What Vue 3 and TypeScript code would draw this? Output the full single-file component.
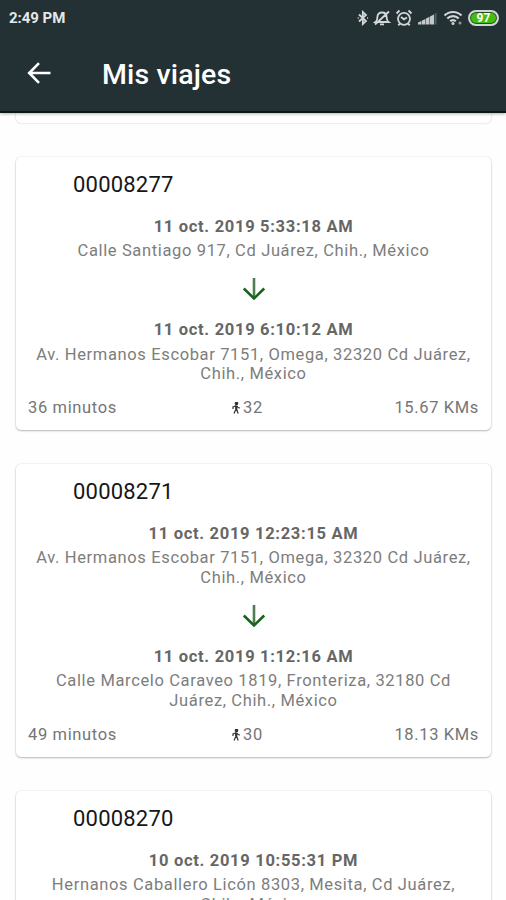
<script setup lang="ts">
interface Stop {
  date: string
  address: string[]
}
interface Trip {
  id: string
  start: Stop
  end: Stop
  duration: string
  passengers: number
  distance: string
}

const trips: Trip[] = [
  {
    id: '00008277',
    start: { date: '11 oct. 2019 5:33:18 AM', address: ['Calle Santiago 917, Cd Juárez, Chih., México'] },
    end: { date: '11 oct. 2019 6:10:12 AM', address: ['Av. Hermanos Escobar 7151, Omega, 32320 Cd Juárez,', 'Chih., México'] },
    duration: '36 minutos',
    passengers: 32,
    distance: '15.67 KMs',
  },
  {
    id: '00008271',
    start: { date: '11 oct. 2019 12:23:15 AM', address: ['Av. Hermanos Escobar 7151, Omega, 32320 Cd Juárez,', 'Chih., México'] },
    end: { date: '11 oct. 2019 1:12:16 AM', address: ['Calle Marcelo Caraveo 1819, Fronteriza, 32180 Cd', 'Juárez, Chih., México'] },
    duration: '49 minutos',
    passengers: 30,
    distance: '18.13 KMs',
  },
  {
    id: '00008270',
    start: { date: '10 oct. 2019 10:55:31 PM', address: ['Hernanos Caballero Licón 8303, Mesita, Cd Juárez,', 'Chih., México'] },
    end: { date: '', address: [] },
    duration: '',
    passengers: 0,
    distance: '',
  },
]
</script>

<template>
  <div class="screen">
    <header class="header">
      <div class="status">
        <span class="time">2:49 PM</span>
        <div class="indicators">
          <svg class="bluetooth" width="12" height="16" viewBox="0 0 12 16">
            <path d="M2 4.5 9 11 5.8 14V2L9 5 2 11.5" />
            <path d="M.8 8h.8M10.3 8h.8" />
          </svg>
          <svg class="bell" width="18" height="16" viewBox="0 0 18 16">
            <path d="M2.5 12c1.800-1.300 1.900-3 1.900-5 0-2.700 1.800-4.500 4.600-4.500s4.600 1.800 4.600 4.500c0 2 .1 3.700 1.900 5zM7 14.300h4M2 14.500 16 1.500" />
          </svg>
          <svg class="alarm" width="18" height="18" viewBox="0 0 18 18">
            <circle cx="9" cy="9.8" r="6" />
            <path d="M6 8 9 10.300l3-1.800M1.500 4.500l3-3M16.500 4.500l-3-3M4.800 14.600l-1.500 1.700M13.200 14.600l1.500 1.700" />
          </svg>
          <svg class="signal" width="20" height="14" viewBox="0 0 20 14">
            <path d="M0 13.500v-2l3.500-1.500v3.500zM4 13.500V9.500l3.500-1.500v5.500zM8 13.500V7.500l3.500-1.700v7.700zM12 13.500v-8l4-2v10z" />
            <path class="faint" d="M16.500 13.500V3l2-1.500v12z" />
          </svg>
          <svg class="wifi" width="20" height="16" viewBox="0 0 20 16">
            <path d="M1.500 5.500c4.700-4.700 12.300-4.700 17 0M4.300 8.500c3.200-3.200 8.200-3.200 11.400 0M7.200 11.300c1.600-1.600 4-1.600 5.600 0" />
            <circle cx="10" cy="13.500" r="1.500" />
            <circle class="badge" cx="17" cy="13" r="1.500" />
          </svg>
          <div class="battery"><span>97</span></div>
        </div>
      </div>
      <div class="toolbar">
        <svg class="back" width="24" height="22" viewBox="0 0 24 22">
          <path d="M23.500 11H2M12 1.200 2.200 11l9.800 9.800" />
        </svg>
        <h1>Mis viajes</h1>
      </div>
    </header>

    <main class="list">
      <div class="card previous"></div>
      <article v-for="trip in trips" :key="trip.id" class="card">
        <h2>{{ trip.id }}</h2>
        <p class="date">{{ trip.start.date }}</p>
        <p class="address"><span v-for="line in trip.start.address" :key="line">{{ line }}</span></p>
        <svg class="arrow" width="24" height="24" viewBox="0 0 24 24">
          <path class="stem" d="M12 1v20" />
          <path d="M1.800 11.500 12 21.500l10.200-10" />
        </svg>
        <p class="date">{{ trip.end.date }}</p>
        <p class="address"><span v-for="line in trip.end.address" :key="line">{{ line }}</span></p>
        <footer>
          <span>{{ trip.duration }}</span>
          <span class="passengers">
            <svg width="10" height="12" viewBox="0 0 10 12">
              <circle cx="5.500" cy="1.500" r="1.200" />
              <path class="torso" d="M5.200 3.500v4" />
              <path d="M5.500 7 7.200 11.500M4.800 7.500 3 11.500M5.200 3.700 2 5v2M5.800 4 7 5.500l2 .5" />
            </svg>{{ trip.passengers }}</span>
          <span class="distance">{{ trip.distance }}</span>
        </footer>
      </article>
    </main>
  </div>
</template>

<style>
body {
  margin: 0;
  overflow: hidden;
}
</style>

<style scoped>
.screen {
  height: 900px;
  overflow: hidden;
  display: flex;
  flex-direction: column;
  background: #fefefe;
  font-family: Roboto, sans-serif;
}
.header {
  flex: none;
  height: 113px;
  background: #233034;
  color: #fff;
  border-bottom: 2px solid #0c1518;
  box-sizing: border-box;
  box-shadow: 0 1px 3px rgba(0, 0, 0, 0.3);
  z-index: 1;
}
.status {
  height: 36px;
  padding: 0 7px 0 9px;
  display: flex;
  align-items: center;
  justify-content: space-between;
}
.time {
  font-size: 15px;
  font-weight: 700;
  letter-spacing: -0.05px;
  color: #e4e8e9;
}
.indicators {
  display: flex;
  align-items: center;
}
.indicators svg {
  fill: none;
  stroke: #d3d7d8;
  stroke-width: 1.8;
}
.bell {
  margin-left: 4px;
}
.alarm {
  margin-left: 4px;
}
.indicators .signal {
  margin-left: 5px;
  fill: #c2c7c8;
  stroke: none;
}
.signal .faint {
  fill: #536065;
}
.wifi {
  margin-left: 5px;
}
.indicators .wifi {
  stroke-width: 2.2;
}
.wifi circle {
  fill: #d3d7d8;
  stroke: none;
}
.wifi .badge {
  fill: #8f999c;
}
.battery {
  margin-left: 5px;
  width: 31px;
  height: 16px;
  box-sizing: border-box;
  border: 2px solid #cfd6d3;
  border-radius: 8px;
  background: #43bd12;
  box-shadow: inset 0 0 0 1px #274d24;
  display: flex;
  align-items: center;
  justify-content: center;
  font-size: 12px;
  font-weight: 700;
}
.toolbar {
  height: 76px;
  display: flex;
  align-items: center;
}
.back {
  margin-left: 27px;
  margin-bottom: 2px;
  fill: none;
  stroke: #fff;
  stroke-width: 2.6;
}
h1 {
  margin: 2px 0 0 51px;
  font-size: 28.5px;
  font-weight: 500;
  line-height: 36px;
  letter-spacing: 0.15px;
}
.list {
  flex: 1;
  padding: 0 15px 0 16px;
}
.card {
  box-sizing: border-box;
  margin-bottom: 34px;
  padding: 15px 12px 12px;
  border-radius: 5px;
  background: #fff;
  box-shadow: 0 1px 2px rgba(0, 0, 0, 0.25), 0 0 2px rgba(0, 0, 0, 0.12);
}
.previous {
  height: 10px;
  padding: 0;
  border-radius: 0 0 5px 5px;
  box-shadow: 0 0 2px rgba(0, 0, 0, 0.25);
}
h2 {
  margin: 0 0 19px 45px;
  font-size: 22px;
  font-weight: 400;
  line-height: 26px;
  letter-spacing: 0.2px;
  color: #161616;
}
p {
  margin: 0;
  text-align: center;
  font-size: 16.5px;
  line-height: 19.7px;
  white-space: nowrap;
}
.date {
  font-weight: 700;
  letter-spacing: 0.7px;
  color: #666;
  margin-bottom: 4.5px;
}
.address {
  letter-spacing: 0.64px;
  color: #7d7d7d;
}
.address span {
  display: block;
}
.arrow {
  display: block;
  margin: 16px auto 19.5px;
  fill: none;
  stroke: #17651a;
  stroke-width: 2.6;
}
.arrow .stem {
  stroke: #4d7d50;
}
footer {
  display: grid;
  grid-template-columns: 1fr auto 1fr;
  margin-top: 14.300px;
  font-size: 16.5px;
  line-height: 19.7px;
  letter-spacing: 0.64px;
  color: #757575;
}
.passengers {
  display: flex;
  align-items: center;
  margin-right: 13px;
}
.passengers svg {
  margin-right: 2px;
  fill: #333;
  stroke: #333;
  stroke-width: 1.2;
}
.passengers .torso {
  stroke-width: 2.2;
}
.passengers path {
  fill: none;
}
.distance {
  text-align: right;
}
</style>
